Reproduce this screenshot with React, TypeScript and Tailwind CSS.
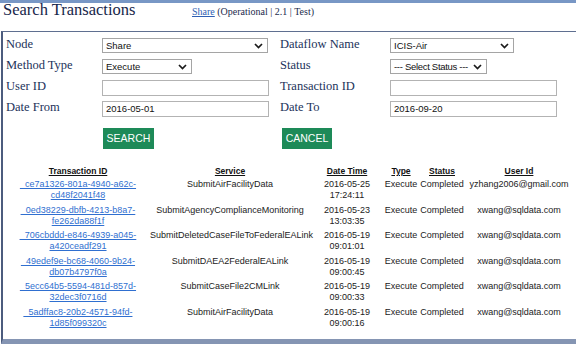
import React from 'react';

type Tx = { id: [string, string]; service: string; date: string; time: string; user: string };

const txs: Tx[] = [
  { id: ['_ce7a1326-801a-4940-a62c-', 'cd48f2041f48'], service: 'SubmitAirFacilityData', date: '2016-05-25', time: '17:24:11', user: 'yzhang2006@gmail.com' },
  { id: ['_0ed38229-dbfb-4213-b8a7-', 'fe262da88f1f'], service: 'SubmitAgencyComplianceMonitoring', date: '2016-05-23', time: '13:03:35', user: 'xwang@sqldata.com' },
  { id: ['_706cbddd-e846-4939-a045-', 'a420ceadf291'], service: 'SubmitDeletedCaseFileToFederalEALink', date: '2016-05-19', time: '09:01:01', user: 'xwang@sqldata.com' },
  { id: ['_49edef9e-bc68-4060-9b24-', 'db07b4797f0a'], service: 'SubmitDAEA2FederalEALink', date: '2016-05-19', time: '09:00:45', user: 'xwang@sqldata.com' },
  { id: ['_5ecc64b5-5594-481d-857d-', '32dec3f0716d'], service: 'SubmitCaseFile2CMLink', date: '2016-05-19', time: '09:00:33', user: 'xwang@sqldata.com' },
  { id: ['_5adffac8-20b2-4571-94fd-', '1d85f099320c'], service: 'SubmitAirFacilityData', date: '2016-05-19', time: '09:00:16', user: 'xwang@sqldata.com' },
];

const Chevron = () => (
  <svg width="9" height="6" viewBox="0 0 9 6" className="shrink-0">
    <path d="M1 1l3.5 3.5L8 1" fill="none" stroke="#1a1a1a" strokeWidth="1.7" />
  </svg>
);

const Select: React.FC<{ value: string; className: string }> = ({ value, className }) => (
  <div className={`h-[15px] border border-[#a5a5a5] bg-white flex items-center justify-between pl-[3px] pr-[4px] text-[9.5px] text-[#111] ${className}`}>
    <span className="leading-none">{value}</span>
    <Chevron />
  </div>
);

const Input: React.FC<{ value?: string; className: string }> = ({ value, className }) => (
  <div className={`h-[16px] border border-[#b3b3b3] bg-white flex items-center pl-[3px] text-[9.5px] text-[#111] ${className}`}>
    <span className="leading-none">{value}</span>
  </div>
);

const Label: React.FC<{ text: string; className: string }> = ({ text, className }) => (
  <div className={`[font-family:'Liberation_Serif',serif] text-[12.5px] leading-[12px] -mt-[3px] text-[#22325a] ${className}`}>{text}</div>
);

export default function App() {
  return (
    <div className="w-[576px] h-[344px] overflow-hidden bg-white flex flex-col [font-family:'Liberation_Sans',Arial,sans-serif]">
      <div className="h-[3px] bg-[#7897c5]" />

      {/* header */}
      <div className="h-[28px] flex items-baseline pl-[3px] pt-[1px] [font-family:'Liberation_Serif',serif]">
        <h1 className="text-[16.5px] leading-[12px] text-[#17264a] w-[189px]">Search Transactions</h1>
        <div className="text-[10px] text-[#1c2b4d]">
          <span className="text-[#2f5fb3] underline">Share</span> (Operational | 2.1 | Test)
        </div>
      </div>

      {/* panel */}
      <div className="flex-1 ml-[1px] border-l-2 border-l-[#4c5c7e] border-t border-t-[#5f6f90] border-b-[5px] border-b-[#8595b3] pl-[3px] pt-[3px] flex flex-col">
        <div className="flex items-center h-[21px]">
          <Label text="Node" className="w-[96px]" />
          <div className="w-[178px]"><Select value="Share" className="w-[166px]" /></div>
          <Label text="Dataflow Name" className="w-[110px]" />
          <Select value="ICIS-Air" className="w-[124px]" />
        </div>
        <div className="flex items-center h-[21px]">
          <Label text="Method Type" className="w-[96px]" />
          <div className="w-[178px]"><Select value="Execute" className="w-[90px]" /></div>
          <Label text="Status" className="w-[110px]" />
          <Select value="--- Select Status ---" className="w-[97px] tracking-[-0.3px]" />
        </div>
        <div className="flex items-center h-[21px]">
          <Label text="User ID" className="w-[96px]" />
          <div className="w-[178px]"><Input className="w-[167px]" /></div>
          <Label text="Transaction ID" className="w-[110px]" />
          <Input className="w-[167px]" />
        </div>
        <div className="flex items-center h-[21px]">
          <Label text="Date From" className="w-[96px]" />
          <div className="w-[178px]"><Input value="2016-05-01" className="w-[167px]" /></div>
          <Label text="Date To" className="w-[110px]" />
          <Input value="2016-09-20" className="w-[167px]" />
        </div>

        <div className="flex mt-[9px] ml-[97px] gap-[128px]">
          <button className="w-[51px] h-[21px] bg-[#1d8a58] text-white text-[10.5px] leading-none">SEARCH</button>
          <button className="w-[50px] h-[21px] bg-[#1d8a58] text-white text-[10.5px] leading-none">CANCEL</button>
        </div>

        {/* results */}
        <div className="mt-[17px] text-[9px] leading-[11px] text-[#222]">
          <div className="flex h-[13px] text-[8.5px] font-bold text-[#111] underline">
            <div className="w-[144px] text-center">Transaction ID</div>
            <div className="w-[160px] text-center">Service</div>
            <div className="w-[74px] text-center">Date Time</div>
            <div className="w-[34px] text-center">Type</div>
            <div className="w-[48px] text-center">Status</div>
            <div className="w-[106px] text-center">User Id</div>
          </div>
          {txs.map((t, i) => (
            <div key={i} className="flex h-[25.6px] whitespace-nowrap">
              <div className="w-[144px] text-center text-[#2f6fd0] underline">
                <div>{t.id[0]}</div>
                <div>{t.id[1]}</div>
              </div>
              <div className="w-[160px] text-center">{t.service}</div>
              <div className="w-[74px] text-center">
                <div>{t.date}</div>
                <div>{t.time}</div>
              </div>
              <div className="w-[34px] text-center">Execute</div>
              <div className="w-[48px] text-center">Completed</div>
              <div className="w-[106px] text-center">{t.user}</div>
            </div>
          ))}
        </div>
      </div>
    </div>
  );
}
